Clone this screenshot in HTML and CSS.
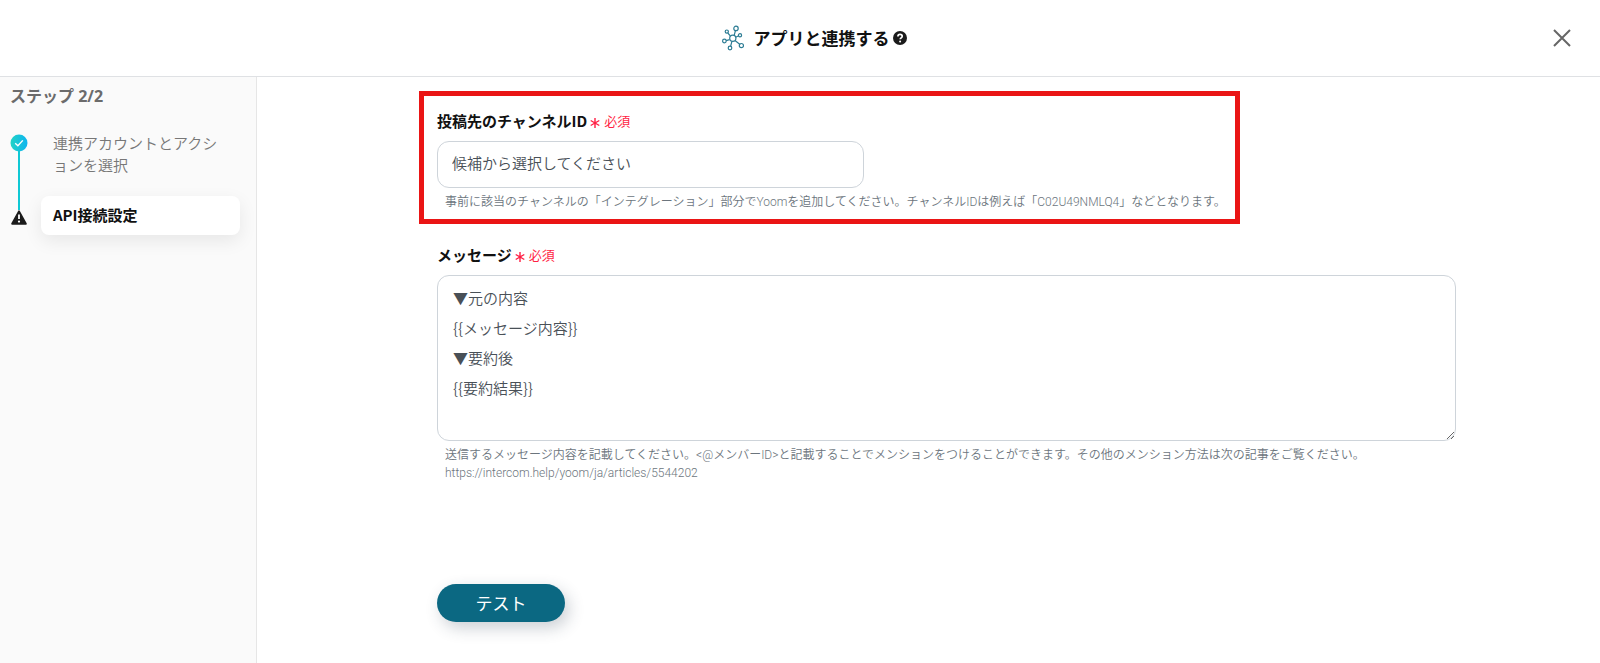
FILE: index.html
```html
<!DOCTYPE html>
<html lang="ja">
<head>
<meta charset="utf-8">
<meta name="viewport" content="width=device-width, initial-scale=1">
<title>アプリと連携する</title>
<link rel="stylesheet" href="styles.css">
</head>
<body>
<header class="header">
  <h1 class="title">
    <svg class="title-icon" viewBox="0 0 22 26" aria-hidden="true">
      <g class="node-lines">
        <path d="M12.2 10.3 13.5 5.4M8.3 10.8 5.8 8M13.6 12.2 16.3 11M7.6 14.6 4.1 15.6M9.9 16.3 8.6 21.3M13 15.6 18 19.4"/>
        <circle cx="10.8" cy="13.3" r="3.1"/>
        <circle cx="14" cy="3.4" r="2.2"/>
        <circle cx="4.8" cy="6.6" r="1.6"/>
        <circle cx="18" cy="10.2" r="1.6"/>
        <circle cx="2.4" cy="16" r="1.8"/>
        <circle cx="8" cy="23" r="1.8"/>
        <circle cx="19.4" cy="20.6" r="2.1"/>
      </g>
    </svg>
    <span class="title-text">アプリと連携する</span>
    <button class="help" type="button" aria-label="ヘルプ">
      <svg viewBox="0 0 14 14" aria-hidden="true">
        <circle cx="7" cy="7" r="7" fill="#1b1b1b"/>
        <path d="M4.9 5.4c0-1.4 1-2.1 2.1-2.1s2.2.7 2.2 1.9c0 1.6-2 1.6-2 3.1" fill="none" stroke="#fff" stroke-width="1.7"/>
        <circle cx="7.1" cy="10.5" r="1" fill="#fff"/>
      </svg>
    </button>
  </h1>
  <button class="close" type="button" aria-label="閉じる">
    <svg viewBox="0 0 18 18" aria-hidden="true"><path d="M1 1l16 16M17 1 1 17"/></svg>
  </button>
</header>
<div class="layout">
  <aside class="sidebar">
    <h2 class="step-count">ステップ 2/2</h2>
    <ol class="steps">
      <li class="step step-done">
        <svg class="step-icon" viewBox="0 0 18 18" aria-hidden="true">
          <defs><linearGradient id="done"><stop offset="0" stop-color="#22d3c5"/><stop offset="1" stop-color="#0db4f0"/></linearGradient></defs>
          <circle cx="9" cy="9" r="8.5" fill="url(#done)"/>
          <path d="M5.2 9.2 7.9 11.8 12.8 6.4" fill="none" stroke="#fff" stroke-width="1.4"/>
        </svg>
        <span class="step-name">連携アカウントとアクションを選択</span>
      </li>
      <li class="step step-current">
        <svg class="step-icon" viewBox="0 0 18 18" aria-hidden="true">
          <path d="M9 4.4 15.8 16.8H2.2z" fill="#1b1b1b" stroke="#1b1b1b" stroke-width="2" stroke-linejoin="round"/>
          <path d="M9 7.4v4.6" stroke="#fff" stroke-width="1.8"/>
          <circle cx="9" cy="14.6" r="1.1" fill="#fff"/>
        </svg>
        <span class="step-name">API接続設定</span>
      </li>
    </ol>
  </aside>
  <main class="main">
    <form class="form">
      <div class="field field-marked">
        <label class="label" for="channel">投稿先のチャンネルID<span class="required"><svg class="star" viewBox="0 0 10 10" aria-hidden="true"><path d="M5 0v10M.7 2.5l8.6 5M9.3 2.5l-8.6 5"/></svg>必須</span></label>
        <select class="control select" id="channel">
          <option>候補から選択してください</option>
        </select>
        <p class="hint">事前に該当のチャンネルの「インテグレーション」部分でYoomを追加してください。チャンネルIDは例えば「C02U49NMLQ4」などとなります。</p>
      </div>
      <div class="field">
        <label class="label" for="message">メッセージ<span class="required"><svg class="star" viewBox="0 0 10 10" aria-hidden="true"><path d="M5 0v10M.7 2.5l8.6 5M9.3 2.5l-8.6 5"/></svg>必須</span></label>
        <textarea class="control textarea" id="message" rows="5">▼元の内容
{{メッセージ内容}}
▼要約後
{{要約結果}}</textarea>
        <p class="hint">送信するメッセージ内容を記載してください。&lt;@メンバーID&gt;と記載することでメンションをつけることができます。その他のメンション方法は次の記事をご覧ください。<br>https://intercom.help/yoom/ja/articles/5544202</p>
      </div>
      <button class="submit" type="button">テスト</button>
    </form>
  </main>
</div>
</body>
</html>
```
FILE: styles.css
```css
* {
  box-sizing: border-box;
}

body {
  display: flex;
  flex-direction: column;
  min-height: 100vh;
  margin: 0;
  background: #fff;
  color: #111;
  font-family: "Noto Sans CJK JP", sans-serif;
  font-size: 15px;
  line-height: 22px;
}

button,
select,
textarea {
  font: inherit;
}

.header {
  display: grid;
  grid-template-columns: 1fr auto 1fr;
  align-items: center;
  height: 77px;
  padding: 0 28px 0 56px;
  border-bottom: 1px solid #dfe1e4;
}

.title {
  display: flex;
  grid-column: 2;
  align-items: center;
  margin: 0;
  font-size: 17px;
  font-weight: 600;
}

.title-icon {
  width: 22px;
  height: 26px;
  margin-right: 10px;
}

.node-lines {
  fill: none;
  stroke: #2c7c94;
  stroke-width: 1.2;
}

.help {
  display: flex;
  width: 14px;
  height: 14px;
  margin-left: 3px;
  padding: 0;
  border: 0;
  background: none;
}

.close {
  display: flex;
  justify-self: end;
  width: 20px;
  height: 20px;
  padding: 1px;
  border: 0;
  background: none;
}

.close path {
  stroke: #666;
  stroke-width: 2;
}

.layout {
  display: flex;
  flex: 1;
}

.sidebar {
  flex: none;
  width: 257px;
  padding: 8px 16px 0 10px;
  border-right: 1px solid #e6e6e6;
  background: #fafafa;
}

.step-count {
  margin: 0;
  color: #6b6b6b;
  font-family: "Open Sans", "Noto Sans CJK JP", sans-serif;
  font-size: 16px;
  font-weight: 700;
}

.steps {
  display: flex;
  flex-direction: column;
  gap: 20px;
  margin: 0;
  padding: 25px 0 0;
  list-style: none;
}

.step {
  display: flex;
  gap: 13px;
  position: relative;
}

.step-icon {
  flex: none;
  width: 18px;
  height: 18px;
}

.step-name {
  flex: 1;
  padding: 0 12px;
}

.step-done {
  color: #777;
  font-weight: 350;
}

.step-done .step-icon {
  margin-top: 2px;
}

.step-done::after {
  content: "";
  position: absolute;
  top: 19px;
  bottom: -34px;
  left: 8px;
  width: 2px;
  background: #10c8d4;
}

.step-current {
  align-items: center;
  font-weight: 600;
}

.step-current .step-name {
  padding: 8px 12px 9px;
  border-radius: 8px;
  background: #fff;
  box-shadow: 0 6px 18px rgba(0, 0, 0, 0.08);
}

.main {
  flex: 1;
  min-width: 0;
  padding: 33px 144px 40px 180px;
}

.field {
  display: flex;
  flex-direction: column;
}

.field-marked {
  position: relative;
  width: fit-content;
  margin-bottom: 33px;
}

.field-marked::after {
  content: "";
  position: absolute;
  inset: -19px -6px -13px -18px;
  border: 5px solid #ea1515;
  pointer-events: none;
}

.label {
  display: flex;
  margin-bottom: 9px;
  font-weight: 600;
}

.required {
  display: flex;
  align-items: center;
  gap: 4px;
  margin-left: 3px;
  color: #ff1f44;
  font-size: 13px;
  font-weight: 400;
}

.star {
  width: 10px;
  height: 10px;
  margin-top: 4px;
}

.star path {
  stroke: #ff1f44;
  stroke-width: 1.4;
}

.control {
  border: 1px solid #ced4da;
  border-radius: 12px;
  background: #fff;
  color: #495057;
  font-weight: 350;
}

.select {
  width: 427px;
  height: 47px;
  padding: 0 14px 4px;
  appearance: none;
}

.textarea {
  width: 100%;
  padding: 7px 15px;
  line-height: 30px;
  resize: vertical;
}

.hint {
  margin: 5px 8px 0;
  color: #6c757d;
  font-family: Roboto, "Noto Sans CJK JP", sans-serif;
  font-size: 12px;
  font-weight: 350;
  line-height: 18px;
}

.submit {
  width: 128px;
  height: 38px;
  margin-top: 102px;
  border: 0;
  border-radius: 19px;
  background: #0b6882;
  box-shadow: 4px 6px 16px rgba(40, 60, 80, 0.24);
  color: #fff;
  font-size: 17px;
}
```
